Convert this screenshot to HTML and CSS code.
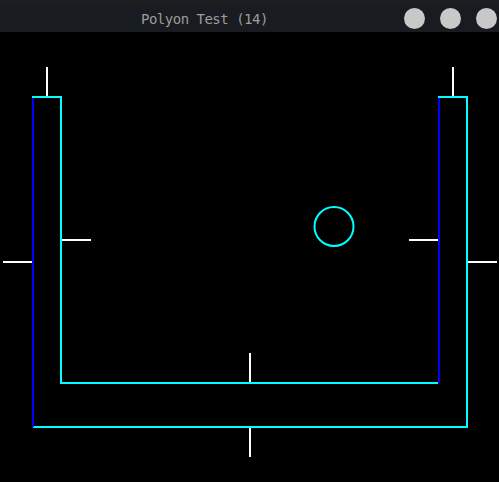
FILE: index.html
```html
<!DOCTYPE html>
<html>
<head>
<meta charset="utf-8">
<link rel="stylesheet" href="styles.css">
</head>
<body>
<div class="window">
  <header class="titlebar">
    <div class="title">Polyon Test (14)</div>
    <div class="controls">
      <span class="dot"></span>
      <span class="dot"></span>
      <span class="dot"></span>
    </div>
  </header>
  <svg class="canvas" width="499" height="450" viewBox="0 32 499 450" shape-rendering="crispEdges">
    <g fill="#00ffff">
      <rect x="32" y="96" width="30" height="2"/>
      <rect x="60" y="96" width="2" height="288"/>
      <rect x="60" y="382" width="378" height="2"/>
      <rect x="438" y="96" width="30" height="2"/>
      <rect x="466" y="96" width="2" height="332"/>
      <rect x="33" y="426" width="435" height="2"/>
    </g>
    <g fill="#0000ff">
      <rect x="32" y="98" width="2" height="329"/>
      <rect x="438" y="98" width="2" height="285"/>
    </g>
    <g fill="#ffffff">
      <rect x="46" y="67" width="2" height="29"/>
      <rect x="452" y="67" width="2" height="29"/>
      <rect x="3" y="261" width="29" height="2"/>
      <rect x="62" y="239" width="29" height="2"/>
      <rect x="409" y="239" width="29" height="2"/>
      <rect x="468" y="261" width="29" height="2"/>
      <rect x="249" y="353" width="2" height="29"/>
      <rect x="249" y="428" width="2" height="29"/>
    </g>
    <circle cx="334" cy="226.5" r="19.5" fill="none" stroke="#00ffff" stroke-width="2" shape-rendering="auto"/>
  </svg>
</div>
</body>
</html>
```
FILE: styles.css
```css
html, body {
  margin: 0;
  padding: 0;
  background: #000;
}
.window {
  width: 499px;
  height: 482px;
  display: flex;
  flex-direction: column;
  background: #000;
  overflow: hidden;
}
.titlebar {
  height: 28px;
  border-top: 4px solid #1d1e1f;
  background: #181b20;
  display: flex;
  align-items: center;
  flex: none;
}
.title {
  flex: 1;
  padding-left: 141px;
  font-family: "DejaVu Sans Mono", monospace;
  font-size: 14px;
  letter-spacing: -0.5px;
  color: #9c9c9c;
  line-height: 28px;
  margin-top: 1px;
}
.controls {
  display: flex;
  gap: 15px;
  padding-right: 2px;
  margin-top: 1px;
}
.dot {
  width: 21px;
  height: 21px;
  border-radius: 50%;
  background: #c8c8c8;
  display: block;
}
.canvas {
  display: block;
  flex: none;
}
```
